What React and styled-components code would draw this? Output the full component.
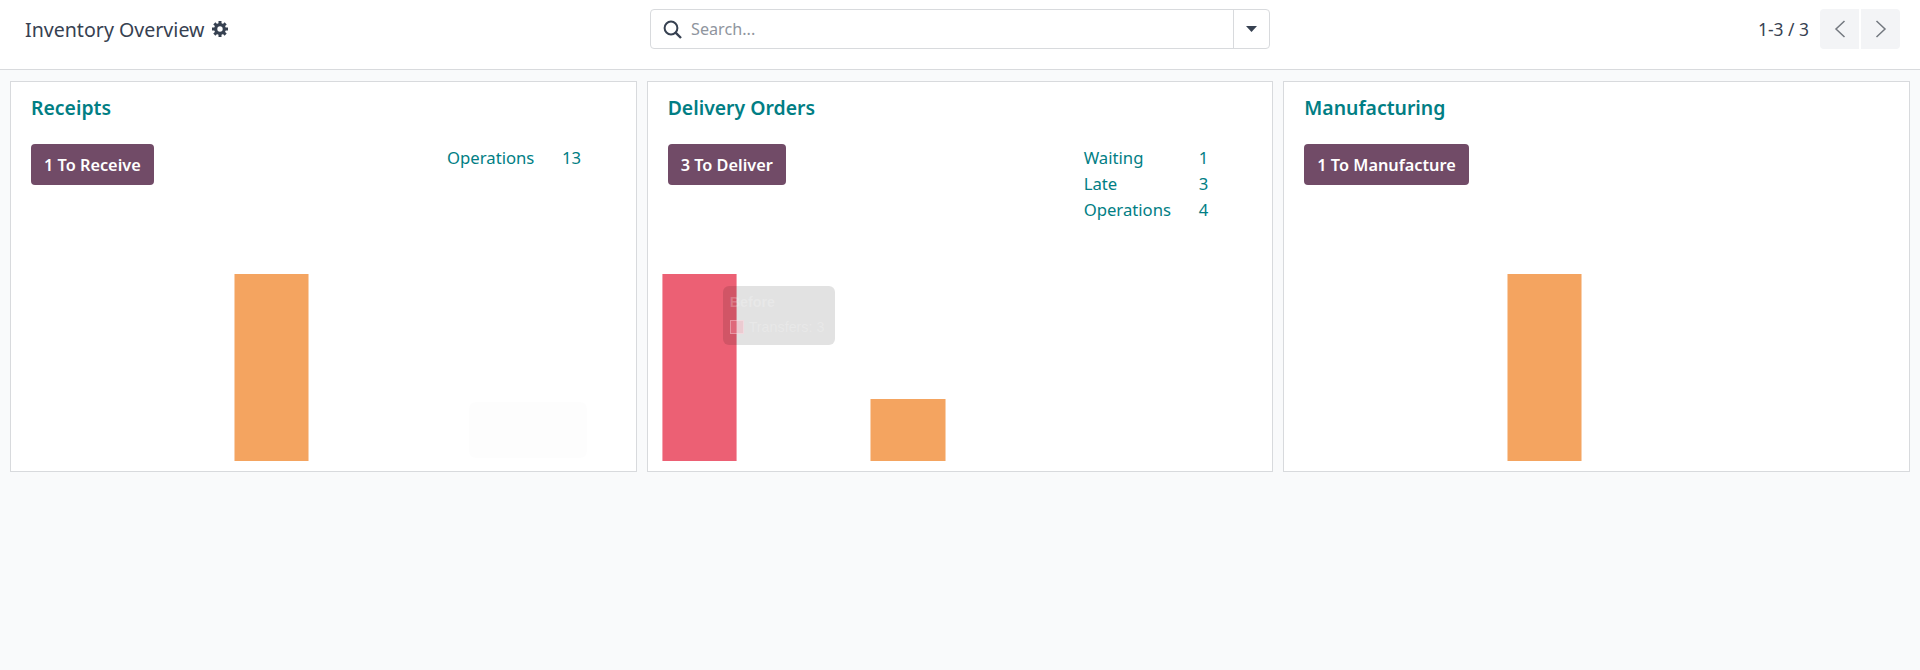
import React from "react";
import styled, { createGlobalStyle } from "styled-components";

const Global = createGlobalStyle`
  html, body { margin: 0; padding: 0; background: #f9fafb; }
  * { box-sizing: border-box; }
  body { font-family: "Noto Sans", "Open Sans", sans-serif; color: #374151; }
`;

const Page = styled.div`
  min-height: 100vh;
  background: #f9fafb;
`;

const TopBar = styled.header`
  height: 70px;
  background: #fff;
  border-bottom: 1px solid #d8dadd;
  display: grid;
  grid-template-columns: 650px 620px 1fr;
  align-items: start;
  padding-top: 9px;
`;

const Breadcrumb = styled.div`
  height: 40px;
  display: flex;
  align-items: center;
  gap: 8px;
  padding-left: 25px;
  font-size: 19.6px;
  color: #374151;
`;

const SearchBox = styled.div`
  height: 40px;
  display: flex;
  align-items: center;
  background: #fff;
  border: 1px solid #d8dadd;
  border-radius: 4px;
`;

const SearchIconWrap = styled.span`
  display: flex;
  padding: 0 9px 0 12px;
  color: #374151;
`;

const SearchInput = styled.input`
  flex: 1;
  min-width: 0;
  height: 100%;
  border: 0;
  outline: 0;
  padding: 0;
  background: transparent;
  font: 16.2px "Noto Sans", sans-serif;
  &::placeholder { color: #8f959e; opacity: 1; }
`;

const CaretButton = styled.button`
  width: 36px;
  height: 100%;
  padding: 0;
  display: flex;
  align-items: center;
  justify-content: center;
  background: transparent;
  border: 0;
  border-left: 1px solid #d8dadd;
  color: #374151;
`;

const Pager = styled.div`
  height: 40px;
  display: flex;
  justify-content: flex-end;
  align-items: center;
  padding-right: 20px;
`;

const PagerText = styled.span`
  font-size: 17.4px;
  margin-right: 11px;
  color: #374151;
`;

const PagerButton = styled.button`
  width: 39px;
  height: 40px;
  padding: 0;
  border: 0;
  background: #f3f4f6;
  color: #73787f;
  display: flex;
  align-items: center;
  justify-content: center;
  border-radius: ${(p) => (p.$side === "left" ? "4px 0 0 4px" : "0 4px 4px 0")};
  margin-left: ${(p) => (p.$side === "left" ? "0" : "2px")};
`;

const Board = styled.main`
  display: grid;
  grid-template-columns: repeat(3, 1fr);
  gap: 10px;
  padding: 11px 10px 0;
`;

const Card = styled.section`
  height: 391px;
  background: #fff;
  border: 1px solid #d8dadd;
  display: flex;
  flex-direction: column;
`;

const CardTop = styled.div`
  padding: 13px 20px 0;
`;

const CardTitle = styled.h2`
  margin: 0;
  font-size: 19.4px;
  line-height: 26px;
  font-weight: 600;
  color: #017e84;
`;

const ActionRow = styled.div`
  display: grid;
  grid-template-columns: 416px 1fr;
  margin-top: 23px;
`;

const ActionButton = styled.button`
  justify-self: start;
  height: 41px;
  padding: 0 13px;
  border: 0;
  border-radius: 4px;
  background: #714b67;
  color: #fff;
  font: 600 16.3px "Noto Sans", sans-serif;
`;

const Stats = styled.div`
  display: grid;
  grid-template-columns: 115px auto;
  grid-auto-rows: 26px;
  justify-content: start;
  align-items: center;
  color: #017e84;
  font-size: 16.7px;
`;

const Chart = styled.div`
  position: relative;
  margin-top: auto;
  margin-bottom: 10px;
  height: 187px;
  display: grid;
  grid-template-columns: repeat(6, 1fr);
  align-items: end;
`;

const Slot = styled.div`
  display: flex;
  justify-content: center;
  align-items: flex-end;
`;

const Bar = styled.div`
  width: 75.5px;
  height: ${(p) => p.$height}px;
  background: ${(p) => (p.$late ? "#ec6074" : "#f4a460")};
  border-left: 1px solid ${(p) => (p.$late ? "#f4a3ae" : "#f9d0ad")};
  border-right: 1px solid ${(p) => (p.$late ? "#f4a3ae" : "#f9d0ad")};
`;

const Tip = styled.div`
  position: absolute;
  left: 75px;
  top: 12px;
  width: 112px;
  height: 59px;
  padding: 7px 7px;
  border-radius: 6px;
  background: rgba(0, 0, 0, 0.115);
  color: rgba(255, 255, 255, 0.22);
  font: 14.3px "Liberation Sans", Arial, sans-serif;
`;

const GhostTip = styled.div`
  position: absolute;
  left: 458px;
  top: 128px;
  width: 118px;
  height: 56px;
  border-radius: 6px;
  background: rgba(0, 0, 0, 0.006);
`;

const TipTitle = styled.div`
  font-weight: 700;
  line-height: 19px;
`;

const TipRow = styled.div`
  display: flex;
  align-items: center;
  gap: 5px;
  margin-top: 6px;
  line-height: 18px;
`;

const TipSwatch = styled.span`
  width: 14px;
  height: 14px;
  background: rgba(255, 150, 170, 0.3);
  border: 1px solid rgba(255, 255, 255, 0.3);
`;

const LeftChevron = () => (
  <svg width="12" height="18" viewBox="0 0 12 18" fill="none" stroke="currentColor" strokeWidth="1.5">
    <path d="M10.5 1 L2 9 L10.5 17" />
  </svg>
);
const RightChevron = () => (
  <svg width="12" height="18" viewBox="0 0 12 18" fill="none" stroke="currentColor" strokeWidth="1.5">
    <path d="M1.5 1 L10 9 L1.5 17" />
  </svg>
);
const SearchGlyph = () => (
  <svg width="19" height="19" viewBox="0 0 19 19" fill="none" stroke="currentColor">
    <circle cx="8" cy="8" r="6.4" strokeWidth="2" />
    <path d="M12.6 12.6 L18 18" strokeWidth="2.4" />
  </svg>
);
const CaretGlyph = () => (
  <svg width="11" height="6" viewBox="0 0 11 6" fill="currentColor">
    <path d="M0 0 H11 L5.5 6 Z" />
  </svg>
);
const GearGlyph = () => (
  <svg width="16" height="16" viewBox="0 0 16 16" fill="currentColor">
    <circle cx="8" cy="8" r="4.3" fill="none" stroke="currentColor" strokeWidth="3.2" />
    {[0, 45, 90, 135, 180, 225, 270, 315].map((a) => (
      <rect key={a} x="6.5" y="0" width="3" height="3" transform={`rotate(${a} 8 8)`} />
    ))}
  </svg>
);

const cards = [
  {
    title: "Receipts",
    action: "1 To Receive",
    stats: [["Operations", "13"]],
    bars: [0, 0, 187, 0, 0, 0],
    ghost: true,
  },
  {
    title: "Delivery Orders",
    action: "3 To Deliver",
    stats: [["Waiting", "1"], ["Late", "3"], ["Operations", "4"]],
    bars: [187, 0, 62, 0, 0, 0],
    tip: true,
  },
  {
    title: "Manufacturing",
    action: "1 To Manufacture",
    stats: [],
    bars: [0, 0, 187, 0, 0, 0],
  },
];

export default function App() {
  return (
    <Page>
      <Global />
      <TopBar>
        <Breadcrumb>
          Inventory Overview <GearGlyph />
        </Breadcrumb>
        <SearchBox>
          <SearchIconWrap><SearchGlyph /></SearchIconWrap>
          <SearchInput placeholder="Search..." />
          <CaretButton aria-label="Toggle filters"><CaretGlyph /></CaretButton>
        </SearchBox>
        <Pager>
          <PagerText>1-3 / 3</PagerText>
          <PagerButton $side="left" aria-label="Previous"><LeftChevron /></PagerButton>
          <PagerButton $side="right" aria-label="Next"><RightChevron /></PagerButton>
        </Pager>
      </TopBar>
      <Board>
        {cards.map((c) => (
          <Card key={c.title}>
            <CardTop>
              <CardTitle>{c.title}</CardTitle>
              <ActionRow>
                <ActionButton>{c.action}</ActionButton>
                <Stats>
                  {c.stats.map(([label, value]) => (
                    <React.Fragment key={label}>
                      <span>{label}</span>
                      <span>{value}</span>
                    </React.Fragment>
                  ))}
                </Stats>
              </ActionRow>
            </CardTop>
            <Chart>
              {c.bars.map((h, i) => (
                <Slot key={i}>{h > 0 && <Bar $height={h} $late={c.tip && i === 0} />}</Slot>
              ))}
              {c.tip && (
                <Tip>
                  <TipTitle>Before</TipTitle>
                  <TipRow><TipSwatch /> Transfers: 3</TipRow>
                </Tip>
              )}
              {c.ghost && <GhostTip />}
            </Chart>
          </Card>
        ))}
      </Board>
    </Page>
  );
}
